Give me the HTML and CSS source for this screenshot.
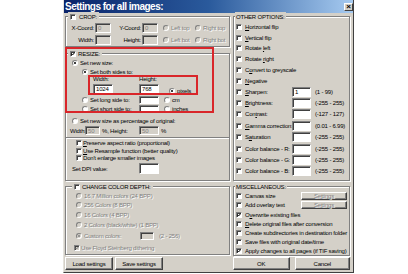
FILE: index.html
```html
<!DOCTYPE html>
<html lang="en">
<head>
  <meta charset="UTF-8">
  <title>Settings for all images</title>
  <link rel="stylesheet" href="styles.css">
</head>
<body>
  <div class="dialog">
    <div class="titlebar">
      <span class="title">Settings for all images:</span>
      <span class="close">×</span>
    </div>

    <div class="main">
      <div class="col">
        <div class="group crop">
          <div class="legend"><span class="cb"></span><span>CROP:</span></div>
          <div class="row h13">
            <span class="lbl xl">X-Coord:</span><span class="inp off cin">0</span>
            <span class="lbl yl">Y-Coord:</span><span class="inp off cin">0</span>
            <span class="pick corner first"><span class="rb off"></span><span class="dim">Left top</span></span>
            <span class="pick"><span class="rb off"></span><span class="dim">Right top</span></span>
          </div>
          <div class="row h12">
            <span class="lbl xl">Width:</span><span class="inp off cin"></span>
            <span class="lbl yl">Height:</span><span class="inp off cin"></span>
            <span class="pick corner first"><span class="rb off"></span><span class="dim">Left bot</span></span>
            <span class="pick"><span class="rb off"></span><span class="dim">Right bot</span></span>
          </div>
        </div>

        <div class="group resize">
          <div class="legend"><span class="cb"><svg class="tk" viewBox="0 0 4 4"><path d="M0.3 1.7 L1.5 3 L3.7 0.6"/></svg></span><span>RESIZE:</span></div>
          <div class="row h10 in6"><span class="pick"><span class="rb on"></span><span>Set new size:</span></span></div>
          <div class="row h8 in16"><span class="pick"><span class="rb on"></span><span>Set both sides to:</span></span></div>
          <div class="row both">
            <div class="field fw"><span>Width:</span><span class="inp sizein">1024</span></div>
            <div class="field fh"><span>Height:</span><span class="inp sizein">768</span></div>
            <span class="pick unit low"><span class="rb on"></span><span>pixels</span></span>
          </div>
          <div class="row h9 in16">
            <span class="pick side"><span class="rb"></span><span>Set long side to:</span></span>
            <span class="inp sidein"></span>
            <span class="pick unit"><span class="rb"></span><span>cm</span></span>
          </div>
          <div class="row h9 in16">
            <span class="pick side"><span class="rb"></span><span>Set short side to:</span></span>
            <span class="inp sidein"></span>
            <span class="pick unit"><span class="rb"></span><span>inches</span></span>
          </div>
          <div class="row h10 in6 gap3"><span class="pick"><span class="rb"></span><span>Set new size as percentage of original:</span></span></div>
          <div class="row h9 in4">
            <span class="lbl pw">Width:</span><span class="inp off pin1">50</span>
            <span class="lbl ph">%, Height:</span><span class="inp off pin2">50</span>
            <span class="pct">%</span>
          </div>
          <div class="sep"></div>
          <div class="row h8 in10"><span class="pick g1"><span class="cb"></span><span><u>P</u>reserve aspect ratio (proportional)</span></span></div>
          <div class="row h7 in10"><span class="pick g1"><span class="cb"></span><span><u>U</u>se Resample function (better quality)</span></span></div>
          <div class="row h8 in10"><span class="pick g1"><span class="cb"></span><span>Don't enlarge smaller images</span></span></div>
          <div class="row h13 in6">
            <span class="lbl dpi">Set DPI value:</span><span class="inp dpiin"></span>
          </div>
        </div>

        <div class="group depth">
          <div class="legend"><span class="cb"></span><span>CHANGE COLOR DEPTH:</span></div>
          <div class="row h9 in10"><span class="pick"><span class="rb off"></span><span class="dim">16,7 Million colors (24 BPP)</span></span></div>
          <div class="row h10 in10"><span class="pick"><span class="rb off"></span><span class="dim">256 Colors (8 BPP)</span></span></div>
          <div class="row h10 in10"><span class="pick"><span class="rb off"></span><span class="dim">16 Colors (4 BPP)</span></span></div>
          <div class="row h10 in10"><span class="pick"><span class="rb off"></span><span class="dim">2 Colors (black/white) (1 BPP)</span></span></div>
          <div class="row h11 in10">
            <span class="pick custom"><span class="rb off on"></span><span class="dim">Custom colors:</span></span>
            <span class="inp off custin"></span>
            <span class="dim range">(2 - 256)</span>
          </div>
          <div class="row h10 in8 gap2"><span class="pick g1"><span class="cb off"><svg class="tk" viewBox="0 0 4 4"><path d="M0.3 1.7 L1.5 3 L3.7 0.6"/></svg></span><span class="dim">Use Floyd Steinberg dithering</span></span></div>
        </div>

        <div class="buttons">
          <span class="btn half">Load settings</span>
          <span class="btn half">Save settings</span>
        </div>
      </div>

      <div class="col">
        <div class="group other">
          <div class="legend text"><span>OTHER OPTIONS:</span></div>
          <div class="row h11 in2"><span class="pick g3"><span class="cb"></span><span><u>H</u>orizontal flip</span></span></div>
          <div class="row h11 in2"><span class="pick g3"><span class="cb"></span><span><u>V</u>ertical flip</span></span></div>
          <div class="row h10 in2"><span class="pick g3"><span class="cb"></span><span>Rotate <u>l</u>eft</span></span></div>
          <div class="row h11 in2"><span class="pick g3"><span class="cb"></span><span>Rotate <u>r</u>ight</span></span></div>
          <div class="row h11 in2"><span class="pick g3"><span class="cb"></span><span>C<u>o</u>nvert to greyscale</span></span></div>
          <div class="row h11 in2"><span class="pick g3"><span class="cb"></span><span><u>N</u>egative</span></span></div>
          <div class="row h11 in2">
            <span class="pick g3 val"><span class="cb"></span><span><u>S</u>harpen:</span></span>
            <span class="inp valin">1</span><span class="range">(1 - 99)</span>
          </div>
          <div class="row h11 in2">
            <span class="pick g3 val"><span class="cb"></span><span><u>B</u>rightness:</span></span>
            <span class="inp valin"></span><span class="range">(-255 - 255)</span>
          </div>
          <div class="row h12 in2">
            <span class="pick g3 val"><span class="cb"></span><span>Con<u>t</u>rast:</span></span>
            <span class="inp valin"></span><span class="range">(-127 - 127)</span>
          </div>
          <div class="row h11 in2">
            <span class="pick g3 val"><span class="cb"></span><span><u>G</u>amma correction:</span></span>
            <span class="inp valin"></span><span class="range">(0.01 - 6.99)</span>
          </div>
          <div class="row h12 in2">
            <span class="pick g3 val"><span class="cb"></span><span>S<u>a</u>turation</span></span>
            <span class="inp valin"></span><span class="range">(-255 - 255)</span>
          </div>
          <div class="row h11 in2">
            <span class="pick g3 val"><span class="cb"></span><span>Color balance - R:</span></span>
            <span class="inp valin"></span><span class="range">(-255 - 255)</span>
          </div>
          <div class="row h11 in2">
            <span class="pick g3 val"><span class="cb"></span><span>Color balance - G:</span></span>
            <span class="inp valin"></span><span class="range">(-255 - 255)</span>
          </div>
          <div class="row h11 in2">
            <span class="pick g3 val"><span class="cb"></span><span>Color balance - B:</span></span>
            <span class="inp valin"></span><span class="range">(-255 - 255)</span>
          </div>
        </div>

        <div class="group misc">
          <div class="legend text"><span>MISCELLANEOUS:</span></div>
          <div class="row h9 in2">
            <span class="pick g3 opt"><span class="cb"></span><span>Canvas size</span></span>
            <span class="btn small dim">Settings</span>
          </div>
          <div class="row h10 in2">
            <span class="pick g3 opt"><span class="cb"></span><span>Add overlay text</span></span>
            <span class="btn small dim">Settings</span>
          </div>
          <div class="row h9 in2"><span class="pick g3"><span class="cb"><svg class="tk" viewBox="0 0 4 4"><path d="M0.3 1.7 L1.5 3 L3.7 0.6"/></svg></span><span>O<u>v</u>erwrite existing files</span></span></div>
          <div class="row h9 in2"><span class="pick g3"><span class="cb"></span><span><u>D</u>elete original files after conversion</span></span></div>
          <div class="row h9 in2"><span class="pick g3"><span class="cb"></span><span>Create subdirectories in destination folder</span></span></div>
          <div class="row h9 in2"><span class="pick g3"><span class="cb"></span><span>Save files with original date/time</span></span></div>
          <div class="row h9 in2"><span class="pick g3"><span class="cb"><svg class="tk" viewBox="0 0 4 4"><path d="M0.3 1.7 L1.5 3 L3.7 0.6"/></svg></span><span>Apply changes to all pages (if TIF saving)</span></span></div>
        </div>

        <div class="buttons right">
          <span class="btn ok">OK</span>
          <span class="btn cancel">Cancel</span>
        </div>
      </div>
    </div>

    <div class="mark big"></div>
    <div class="mark inner"></div>
  </div>
</body>
</html>
```

FILE: styles.css
```css
html, body {
  margin: 0;
  padding: 0;
  background: #fff;
}
body {
  font-family: "Liberation Sans", Arial, sans-serif;
  font-size: 6px;
  letter-spacing: -0.2px;
  line-height: 1;
  color: #000;
}
u {
  text-decoration-thickness: 0.5px;
}

.dialog {
  position: relative;
  box-sizing: border-box;
  width: 291px;
  height: 273px;
  margin-left: 63px;
  background: #d4d0c8;
  border-left: 1px solid #e4e2dc;
  border-right: 1px solid #404040;
  border-bottom: 1px solid #404040;
}

.titlebar {
  height: 13px;
  display: flex;
  align-items: center;
  justify-content: space-between;
  padding-left: 1px;
  background: linear-gradient(90deg, #0a246a 0%, #2a5a9c 50%, #a6caf0 100%);
  color: #fff;
}
.title {
  font-weight: bold;
  font-size: 10px;
  letter-spacing: -0.5px;
}
.close {
  box-sizing: border-box;
  width: 9px;
  height: 8px;
  display: flex;
  align-items: center;
  justify-content: center;
  background: #d4d0c8;
  border: 1px solid;
  border-color: #fff #404040 #404040 #fff;
  color: #000;
  font-size: 8px;
  font-weight: bold;
}

.main {
  display: grid;
  grid-template-columns: 165px 117px;
  column-gap: 3px;
  padding: 3px 0 0 1px;
}
.col {
  display: flex;
  flex-direction: column;
}

/* group boxes */
.group {
  display: flex;
  flex-direction: column;
  border: 1px solid #808080;
  box-shadow: inset 1px 1px 0 #fff, 1px 1px 0 #fff;
}
.legend {
  align-self: flex-start;
  display: flex;
  align-items: center;
  gap: 2px;
  height: 9px;
  margin: -5px 0 0 2px;
  padding: 0 2px;
  background: #d4d0c8;
}
.legend.text {
  margin-left: 1px;
  padding: 0 1px;
}
.depth .legend {
  margin-left: 6px;
}
.crop .legend {
  gap: 3px;
}

.resize {
  margin-top: 6px;
  padding-bottom: 5px;
}
.depth {
  margin-top: 5px;
  padding-bottom: 1px;
}
.other {
  padding-bottom: 4px;
}
.misc {
  margin-top: 5px;
}

/* rows */
.row {
  display: flex;
  align-items: center;
  white-space: nowrap;
}
.h7 { height: 7px; }
.h8 { height: 8px; }
.h9 { height: 9px; }
.h10 { height: 10px; }
.h11 { height: 11px; }
.h12 { height: 12px; }
.h13 { height: 13px; }
.in2 { padding-left: 2px; }
.in4 { padding-left: 4px; }
.in6 { padding-left: 6px; }
.in8 { padding-left: 8px; }
.in10 { padding-left: 10px; }
.in16 { padding-left: 16px; }
.gap2 { margin-top: 2px; }
.gap3 { margin-top: 3px; }

.pick {
  display: flex;
  align-items: center;
  gap: 2px;
}
.pick.g1 { gap: 1px; }
.pick.g3 { gap: 3px; }

.lbl {
  flex: none;
}
.xl {
  width: 28px;
  text-align: right;
  margin-right: 1px;
}
.yl {
  width: 30px;
  text-align: right;
  margin-right: 1px;
}
.corner.first {
  width: 32px;
  margin-left: 5px;
}

.both {
  height: 19px;
  align-items: flex-start;
  padding-left: 27px;
}
.field {
  display: flex;
  flex-direction: column;
  gap: 2px;
}
.fw { width: 46px; }
.fh { width: 25px; }
.unit.low {
  align-self: flex-end;
  height: 8px;
}
.side { width: 57px; }
.unit { margin-left: 5px; }

.pw { width: 15px; }
.ph {
  width: 37px;
  padding-left: 2px;
}
.pct { margin-left: 2px; }
.dpi { width: 67px; }

.sep {
  margin-top: 2px;
  border-top: 1px solid #808080;
  border-bottom: 1px solid #fff;
}

.custom { width: 64px; }
.range { margin-left: 4px; }
.depth .range { margin-left: 5px; }

.val { width: 56px; }
.opt { width: 65px; }

/* controls */
.inp {
  box-sizing: border-box;
  display: flex;
  align-items: center;
  flex: none;
  padding-left: 2px;
  height: 10px;
  background: #fff;
  border: 1px solid;
  border-color: #808080 #fff #fff #808080;
  box-shadow: inset 1px 1px 0 #404040;
}
.inp.off {
  background: #d4d0c8;
  color: #808080;
}
.cin { width: 16px; }
.sizein { width: 20px; }
.sidein { width: 20px; height: 8px; }
.pin1 { width: 15px; height: 9px; }
.pin2 { width: 20px; height: 9px; }
.dpiin { width: 20px; height: 11px; }
.custin { width: 14px; height: 8px; }
.valin { width: 19px; }

.cb {
  box-sizing: border-box;
  flex: none;
  width: 6px;
  height: 6px;
  display: flex;
  background: #fff;
  border: 1px solid;
  border-color: #808080 #fff #fff #808080;
  box-shadow: inset 1px 1px 0 #404040;
}
.cb.off {
  background: #d4d0c8;
}
.tk {
  width: 4px;
  height: 4px;
  fill: none;
  stroke: #000;
  stroke-width: 1;
}
.cb.off .tk {
  stroke: #808080;
}

.rb {
  box-sizing: border-box;
  flex: none;
  width: 6px;
  height: 6px;
  display: flex;
  align-items: center;
  justify-content: center;
  border-radius: 50%;
  background: #fff;
  border: 1px solid;
  border-color: #808080 #fff #fff #808080;
}
.rb.off {
  background: #d4d0c8;
}
.rb.on::after {
  content: "";
  width: 2px;
  height: 2px;
  border-radius: 50%;
  background: #000;
}
.rb.off.on::after {
  background: #808080;
}

.dim {
  color: #808080;
  text-shadow: 1px 1px 0 #fff;
}

.btn {
  box-sizing: border-box;
  display: flex;
  align-items: center;
  justify-content: center;
  background: #d4d0c8;
  border: 1px solid;
  border-color: #fff #404040 #404040 #fff;
  box-shadow: inset -1px -1px 0 #808080;
}
.btn.small {
  width: 46px;
  height: 8px;
}
.buttons {
  display: flex;
  gap: 2px;
  margin-top: 2px;
}
.buttons.right {
  margin-top: 1px;
  gap: 5px;
}
.buttons .btn {
  height: 13px;
}
.half { width: 48px; }
.ok { width: 57px; }
.cancel { width: 56px; }

/* red annotation frames */
.mark {
  position: absolute;
  box-sizing: border-box;
  border: 2px solid #d9262a;
}
.mark.big {
  left: 1px;
  top: 47px;
  width: 149px;
  height: 66px;
}
.mark.inner {
  left: 24px;
  top: 75px;
  width: 110px;
  height: 20px;
}
```
